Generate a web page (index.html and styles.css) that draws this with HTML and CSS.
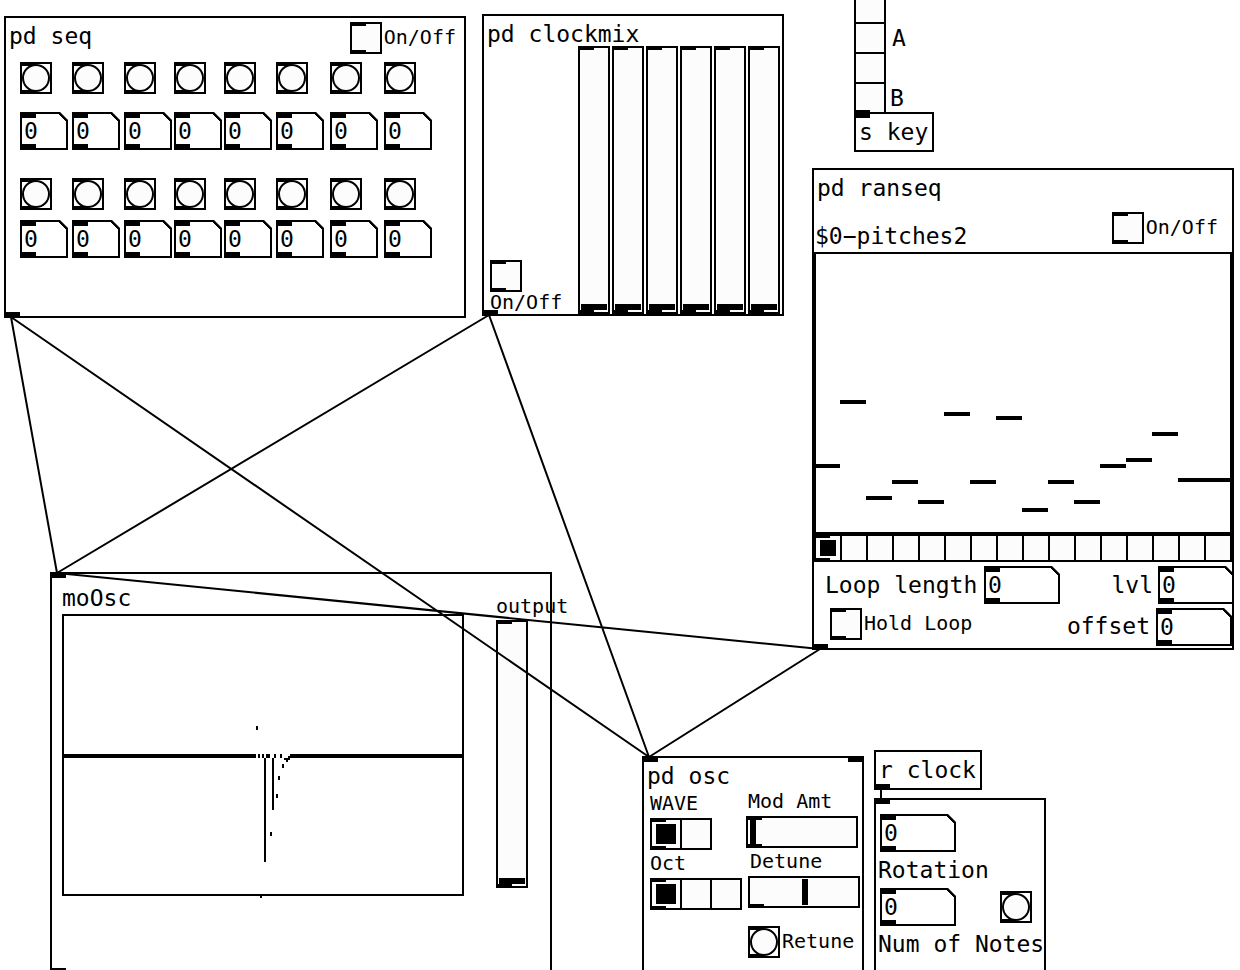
FILE: index.html
```html
<!DOCTYPE html>
<html lang="en">
<head>
<meta charset="utf-8">
<title>Patch</title>
<link rel="stylesheet" href="styles.css">
</head>
<body>
<main class="patch">

  <section class="node outlet seq">
    <header class="seq-head">
      <h2 class="text">pd seq</h2>
      <label class="control"><input class="toggle" type="checkbox"><span class="label">On/Off</span></label>
    </header>
    <div class="steps">
      <button class="bang" aria-label="Step 1"></button>
      <button class="bang" aria-label="Step 2"></button>
      <button class="bang" aria-label="Step 3"></button>
      <button class="bang" aria-label="Step 4"></button>
      <button class="bang" aria-label="Step 5"></button>
      <button class="bang" aria-label="Step 6"></button>
      <button class="bang" aria-label="Step 7"></button>
      <button class="bang" aria-label="Step 8"></button>
      <input class="number" value="0" aria-label="Value 1">
      <input class="number" value="0" aria-label="Value 2">
      <input class="number" value="0" aria-label="Value 3">
      <input class="number" value="0" aria-label="Value 4">
      <input class="number" value="0" aria-label="Value 5">
      <input class="number" value="0" aria-label="Value 6">
      <input class="number" value="0" aria-label="Value 7">
      <input class="number" value="0" aria-label="Value 8">
      <button class="bang" aria-label="Step 9"></button>
      <button class="bang" aria-label="Step 10"></button>
      <button class="bang" aria-label="Step 11"></button>
      <button class="bang" aria-label="Step 12"></button>
      <button class="bang" aria-label="Step 13"></button>
      <button class="bang" aria-label="Step 14"></button>
      <button class="bang" aria-label="Step 15"></button>
      <button class="bang" aria-label="Step 16"></button>
      <input class="number" value="0" aria-label="Value 9">
      <input class="number" value="0" aria-label="Value 10">
      <input class="number" value="0" aria-label="Value 11">
      <input class="number" value="0" aria-label="Value 12">
      <input class="number" value="0" aria-label="Value 13">
      <input class="number" value="0" aria-label="Value 14">
      <input class="number" value="0" aria-label="Value 15">
      <input class="number" value="0" aria-label="Value 16">
    </div>
  </section>

  <section class="node outlet clockmix">
    <div class="mix-side">
      <h2 class="text">pd clockmix</h2>
      <label class="control stacked"><input class="toggle" type="checkbox"><span class="label">On/Off</span></label>
    </div>
    <div class="faders">
      <input class="fader" type="range" value="0" aria-label="Clock 1">
      <input class="fader" type="range" value="0" aria-label="Clock 2">
      <input class="fader" type="range" value="0" aria-label="Clock 3">
      <input class="fader" type="range" value="0" aria-label="Clock 4">
      <input class="fader" type="range" value="0" aria-label="Clock 5">
      <input class="fader" type="range" value="0" aria-label="Clock 6">
    </div>
  </section>

  <div class="radio vertical keys" role="radiogroup" aria-label="Key">
    <input type="radio" name="key" aria-label="G sharp">
    <input type="radio" name="key" aria-label="A">
    <input type="radio" name="key" aria-label="A sharp">
    <input type="radio" name="key" aria-label="B">
  </div>
  <p class="text comment key-a">A</p>
  <p class="text comment key-b">B</p>
  <div class="node inlet object send-key"><p class="text">s key</p></div>

  <section class="node outlet ranseq">
    <h2 class="text title">pd ranseq</h2>
    <div class="array-head">
      <p class="text">$0−pitches2</p>
      <label class="control"><input class="toggle" type="checkbox"><span class="label">On/Off</span></label>
    </div>
    <svg class="plot" viewBox="0 0 418 282" role="img" aria-label="Pitches">
      <rect class="frame" x="1" y="1" width="416" height="280"/>
      <path d="M0 212h26v4H0zM26 148h26v4H26zM52 244h26v4H52zM78 228h26v4H78zM104 248h26v4h-26zM130 160h26v4h-26zM156 228h26v4h-26zM182 164h26v4h-26zM208 256h26v4h-26zM234 228h26v4h-26zM260 248h26v4h-26zM286 212h26v4h-26zM312 206h26v4h-26zM338 180h26v4h-26zM364 226h54v4h-54z"/>
    </svg>
    <div class="radio small" role="radiogroup" aria-label="Position">
      <input type="radio" name="pos" aria-label="1" checked>
      <input type="radio" name="pos" aria-label="2">
      <input type="radio" name="pos" aria-label="3">
      <input type="radio" name="pos" aria-label="4">
      <input type="radio" name="pos" aria-label="5">
      <input type="radio" name="pos" aria-label="6">
      <input type="radio" name="pos" aria-label="7">
      <input type="radio" name="pos" aria-label="8">
      <input type="radio" name="pos" aria-label="9">
      <input type="radio" name="pos" aria-label="10">
      <input type="radio" name="pos" aria-label="11">
      <input type="radio" name="pos" aria-label="12">
      <input type="radio" name="pos" aria-label="13">
      <input type="radio" name="pos" aria-label="14">
      <input type="radio" name="pos" aria-label="15">
      <input type="radio" name="pos" aria-label="16">
    </div>
    <div class="loop-row">
      <label class="text loop-name" for="loop">Loop length</label>
      <input class="number wide" id="loop" value="0">
      <label class="text lvl-name" for="lvl">lvl</label>
      <input class="number wide" id="lvl" value="0">
    </div>
    <div class="hold-row">
      <label class="control"><input class="toggle" type="checkbox"><span class="label">Hold Loop</span></label>
      <label class="text offset-name" for="offset">offset</label>
      <input class="number wide" id="offset" value="0">
    </div>
  </section>

  <section class="node inlet outlet mosc">
    <div class="scope">
      <h2 class="text">moOsc</h2>
      <svg class="plot" viewBox="0 0 402 282" role="img" aria-label="Waveform">
        <rect class="frame" x="1" y="1" width="400" height="280"/>
        <path d="M0 140h194v4H0zM228 140h174v4H228zM194 112h2v4h-2zM196 140h2v4h-2zM200 140h2v4h-2zM204 140h4v4h-4zM212 140h2v4h-2zM218 140h2v4h-2zM202 144h2v104h-2zM210 144h2v52h-2zM220 150h2v4h-2zM216 162h2v4h-2zM214 180h2v4h-2zM208 218h2v4h-2zM222 144h4v2h-4zM224 146h2v2h-2zM226 142h2v4h-2zM198 282h2v2h-2z"/>
      </svg>
    </div>
    <div class="output">
      <label class="label" for="out">output</label>
      <input class="fader" id="out" type="range" value="0">
    </div>
  </section>

  <section class="node two-inlets osc">
    <h2 class="text title">pd osc</h2>
    <div class="osc-body">
      <div class="osc-left">
        <span class="label" id="wave">WAVE</span>
        <div class="radio" role="radiogroup" aria-labelledby="wave">
          <input type="radio" name="wave" aria-label="1" checked>
          <input type="radio" name="wave" aria-label="2">
        </div>
        <span class="label" id="oct">Oct</span>
        <div class="radio" role="radiogroup" aria-labelledby="oct">
          <input type="radio" name="oct" aria-label="1" checked>
          <input type="radio" name="oct" aria-label="2">
          <input type="radio" name="oct" aria-label="3">
        </div>
      </div>
      <div class="osc-right">
        <label class="label slider-name" for="mod">Mod Amt</label>
        <input class="slider" id="mod" type="range" value="0">
        <div class="detune">
          <label class="label slider-name" for="detune">Detune</label>
          <input class="slider no-inlet" id="detune" type="range" value="51">
          <div class="control retune"><button class="bang" id="retune"></button><label class="label" for="retune">Retune</label></div>
        </div>
      </div>
    </div>
  </section>

  <div class="node outlet object receive-clock"><p class="text">r clock</p></div>

  <section class="node inlet clock">
    <input class="number wide" id="rotation" value="0">
    <label class="text" for="rotation">Rotation</label>
    <div class="notes-row">
      <input class="number wide" id="notes" value="0">
      <button class="bang" aria-label="Send notes"></button>
    </div>
    <label class="text" for="notes">Num of Notes</label>
  </section>

  <svg class="wires" aria-hidden="true">
    <path d="M11 317L57 573M11 317L649 757M489 315L57 573M489 315L649 757M57 573L820 649M820 649L649 757M881 788V800"/>
  </svg>
</main>
</body>
</html>
```

FILE: styles.css
```css
*,
*::before {
  box-sizing: border-box;
}

:root {
  --ink: linear-gradient(#000, #000);
  --fill: #fcfcfc;
}

body {
  margin: 0;
  background: #fff;
  color: #000;
  font-family: "DejaVu Sans Mono", monospace;
}

.patch {
  position: relative;
  height: 100vh;
  overflow: hidden;
}

/* Text */

.text {
  margin: 0;
  font-size: 23px;
  font-weight: normal;
  line-height: 28px;
  white-space: nowrap;
}

.label {
  padding-bottom: 2px;
  font-size: 20px;
  line-height: 20px;
  white-space: nowrap;
}

/* Boxes on the canvas, with their inlets and outlets */

.node {
  position: absolute;
  border: 2px solid #000;
  background-repeat: no-repeat;
  background-origin: border-box;
  background-size: 16px 6px;
}

.inlet {
  background-image: var(--ink);
  background-position: left top;
}

.outlet {
  background-image: var(--ink);
  background-position: left bottom;
}

.inlet.outlet {
  background-image: var(--ink), var(--ink);
  background-position: left top, left bottom;
}

.two-inlets {
  background-image: var(--ink), var(--ink);
  background-position: left top, right top;
}

.object {
  padding: 4px 3px;
}

.comment {
  position: absolute;
}

.title {
  padding: 4px 0 0 3px;
}

/* Controls */

.bang,
.toggle,
.number,
.slider,
.fader,
.radio input {
  appearance: none;
  flex: none;
  margin: 0;
  padding: 0;
  border-radius: 0;
  color: #000;
  background-repeat: no-repeat;
}

.bang,
.toggle {
  width: 32px;
  height: 32px;
  border: 2px solid #000;
  background-image: var(--ink), var(--ink);
  background-origin: border-box;
  background-position: left top, left bottom;
  background-size: 16px 4px;
}

.toggle {
  background-color: var(--fill);
}

.bang {
  background-color: #fff;
}

.bang::before {
  content: "";
  display: block;
  width: 28px;
  height: 28px;
  border: 2px solid #000;
  border-radius: 50%;
  background: var(--fill);
}

.number {
  width: 48px;
  height: 38px;
  padding-left: 4px;
  border: 0;
  font: 23px "DejaVu Sans Mono", monospace;
  background-image:
    var(--ink), var(--ink),
    linear-gradient(45deg, #fff 6px, #000 6px 8px, #fff 9px),
    var(--ink), var(--ink), var(--ink), var(--ink);
  background-position:
    left top, left bottom,
    right top,
    left top, left bottom, left top, right top;
  background-size:
    16px 6px, 16px 6px,
    10px 10px,
    100% 2px, 100% 2px, 2px 100%, 2px 100%;
}

.number.wide {
  width: 76px;
}

.fader,
.slider {
  display: block;
  border: 2px solid #000;
  background-color: var(--fill);
  background-image: var(--ink), var(--ink);
  background-origin: border-box;
  background-position: left top, left bottom;
  background-size: 16px 4px;
}

.fader {
  width: 32px;
  height: 268px;
  padding: 2px 1px;
  writing-mode: vertical-lr;
  direction: rtl;
}

.slider {
  width: 112px;
  height: 32px;
  padding: 1px 2px;
}

.no-inlet {
  background-image: none, var(--ink);
}

.fader::-webkit-slider-thumb {
  appearance: none;
  width: 26px;
  height: 6px;
  background: #000;
}

.slider::-webkit-slider-thumb {
  appearance: none;
  width: 6px;
  height: 26px;
  background: #000;
}

.radio {
  display: flex;
  gap: 2px;
  width: max-content;
  border: 2px solid #000;
  background: #000;
}

.radio.vertical {
  flex-direction: column;
}

.radio input {
  width: 28px;
  height: 28px;
  background-color: var(--fill);
}

.radio.small input {
  width: 24px;
  height: 24px;
}

.radio input:first-child {
  background-image: var(--ink), var(--ink);
  background-position: left top, left bottom;
  background-size: 14px 2px;
}

.radio.vertical input:first-child {
  background-image: var(--ink);
}

.radio.vertical input:last-child {
  background-image: var(--ink);
  background-position: left bottom;
  background-size: 14px 2px;
}

.radio input:first-child:checked {
  background-image: var(--ink), var(--ink), var(--ink);
  background-position: left top, left bottom, center;
  background-size: 14px 2px, 14px 2px, 20px 20px;
}

.radio.small input:first-child:checked {
  background-size: 14px 2px, 14px 2px, 16px 16px;
}

.control {
  display: flex;
  align-items: center;
  gap: 2px;
}

.control.stacked {
  flex-direction: column;
  align-items: flex-start;
  gap: 0;
}

.plot {
  display: block;
  width: 100%;
  overflow: visible;
  shape-rendering: crispEdges;
}

.frame {
  fill: none;
  stroke: #000;
  stroke-width: 2px;
}

/* seq */

.seq {
  left: 4px;
  top: 16px;
  width: 462px;
  padding-bottom: 58px;
}

.seq-head {
  display: flex;
  justify-content: space-between;
  align-items: flex-start;
  padding: 4px 8px 8px 3px;
}

.steps {
  display: grid;
  grid-template-columns: 52px 52px 50px 50px 52px 54px 54px 48px;
  grid-template-rows: 50px 66px 42px 38px;
  padding-left: 14px;
}

/* clockmix */

.clockmix {
  left: 482px;
  top: 14px;
  width: 302px;
  display: flex;
}

.mix-side {
  flex: 1;
  min-width: 0;
  display: flex;
  flex-direction: column;
  justify-content: space-between;
  padding: 4px 0 0 3px;
}

.mix-side .control {
  padding-left: 3px;
}

.faders {
  display: flex;
  gap: 2px;
  padding: 30px 2px 0 0;
}

/* key selector */

.keys {
  position: absolute;
  left: 854px;
  top: -8px;
}

.key-a {
  left: 892px;
  top: 24px;
}

.key-b {
  left: 890px;
  top: 84px;
}

.send-key {
  left: 854px;
  top: 112px;
  width: 80px;
}

/* ranseq */

.ranseq {
  left: 812px;
  top: 168px;
  width: 422px;
  padding-bottom: 2px;
}

.array-head {
  display: flex;
  justify-content: space-between;
  padding: 10px 14px 0 0;
}

.array-head .text {
  padding: 10px 0 2px 1px;
}

.array-head .control {
  align-self: flex-start;
}

.loop-row {
  display: grid;
  grid-template-columns: 170px 76px 1fr 74px;
  align-items: center;
  padding-top: 4px;
  overflow: hidden;
}

.loop-name {
  padding-left: 11px;
}

.lvl-name {
  padding-right: 5px;
  text-align: right;
}

.hold-row {
  display: flex;
  align-items: flex-start;
  padding: 4px 0 0 16px;
}

.offset-name {
  margin-left: auto;
  padding: 4px 6px 0 0;
}

/* moOsc */

.mosc {
  left: 50px;
  top: 572px;
  width: 502px;
  display: flex;
  gap: 32px;
  padding: 10px 22px 76px 10px;
}

.scope {
  flex: 1;
  display: flex;
  flex-direction: column;
  gap: 2px;
}

.output {
  width: 32px;
  display: flex;
  flex-direction: column;
  gap: 2px;
  padding-top: 12px;
}

/* osc */

.osc {
  left: 642px;
  top: 756px;
  width: 222px;
  padding-bottom: 20px;
}

.osc-body {
  display: grid;
  grid-template-columns: 96px 1fr;
  padding-left: 6px;
}

.osc-left,
.osc-right,
.detune {
  display: flex;
  flex-direction: column;
  gap: 3px;
}

.osc-left {
  padding-top: 3px;
}

.osc-right {
  padding-top: 1px;
}

.slider-name {
  padding-left: 2px;
}

.detune {
  padding-left: 2px;
}

.retune {
  padding-top: 15px;
}

/* clock */

.receive-clock {
  left: 874px;
  top: 750px;
  width: 108px;
}

.clock {
  left: 874px;
  top: 798px;
  width: 172px;
  display: flex;
  flex-direction: column;
  gap: 4px;
  padding: 14px 0 40px 2px;
}

.clock > .number {
  margin-left: 2px;
}

.notes-row {
  display: flex;
  justify-content: space-between;
  align-items: center;
  padding: 0 12px 0 2px;
}

/* patch cords */

.wires {
  position: absolute;
  inset: 0;
  width: 100%;
  height: 100%;
  fill: none;
  stroke: #000;
  stroke-width: 2px;
  pointer-events: none;
}
```
